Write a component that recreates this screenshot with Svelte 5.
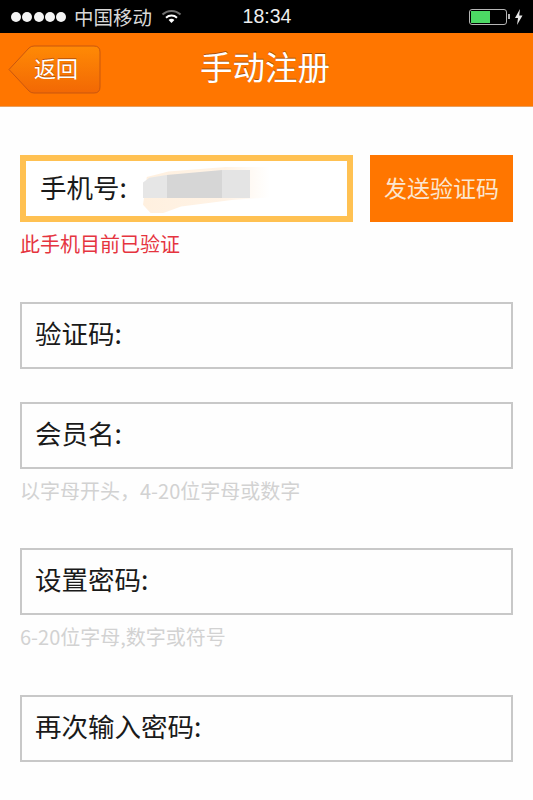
<script>
  const fields = [
    { label: '验证码:' },
    { label: '会员名:', hint: '以字母开头，4-20位字母或数字' },
    { label: '设置密码:', hint: '6-20位字母,数字或符号' },
    { label: '再次输入密码:' }
  ];
</script>

<div class="page">
  <div class="status">
    <div class="status-left">
      <span class="dots">
        {#each [1, 2, 3, 4, 5] as d (d)}<i></i>{/each}
      </span>
      <span class="carrier">中国移动</span>
      <svg class="wifi" width="21" height="15" viewBox="0 0 21 15">
        <path d="M1.5 5.5 A13 13 0 0 1 19.5 5.5" fill="none" stroke="#6f6f6f" stroke-width="2" />
        <path d="M5 8.7 A8.2 8.2 0 0 1 16 8.7" fill="none" stroke="#fff" stroke-width="2" />
        <path d="M10.5 14 L7.6 11 A4 4 0 0 1 13.4 11 Z" fill="#fff" />
      </svg>
    </div>
    <span class="time">18:34</span>
    <div class="status-right">
      <span class="battery"><span class="level"></span></span>
      <span class="nub"></span>
      <svg width="9" height="16" viewBox="0 0 9 16">
        <path d="M6 0 L1 9 H4 L3 16 L8.5 6.5 H5.2 Z" fill="#e8e8e8" />
      </svg>
    </div>
  </div>

  <header class="nav">
    <button class="back">
      <svg class="back-shape" width="93" height="49" viewBox="0 0 93 49">
        <defs>
          <linearGradient id="backfill" x1="0" y1="0" x2="0" y2="1">
            <stop offset="0" stop-color="#ff8a05" />
            <stop offset="1" stop-color="#f26804" />
          </linearGradient>
        </defs>
        <path d="M1 24.5 L21 3 Q23 1 26 1 H86 Q92 1 92 7 V42 Q92 48 86 48 H26 Q23 48 21 46 Z" fill="url(#backfill)" stroke="#c9560f" stroke-width="1" />
      </svg>
      <span>返回</span>
    </button>
    <h1>手动注册</h1>
  </header>

  <main class="form">
    <div class="phone-row">
      <div class="phone-input">
        <span>手机号:</span>
        <div class="smudge">
          <div class="smudge-glow"></div>
          <div class="smudge-grey"></div>
        </div>
      </div>
      <button class="send">发送验证码</button>
    </div>
    <p class="error">此手机目前已验证</p>

    {#each fields as f (f.label)}
      <div class="field">
        <div class="input">{f.label}</div>
        {#if f.hint}<p class="hint">{f.hint}</p>{/if}
      </div>
    {/each}
  </main>
</div>

<style>
  :global(body) {
    margin: 0;
    background: #fff;
  }

  .page {
    width: 533px;
    height: 800px;
    overflow: hidden;
    background: #fefefe;
    font-family: "Noto Sans CJK SC", "Liberation Sans", sans-serif;
  }

  .status {
    height: 33px;
    background: #000;
    color: #fff;
    display: grid;
    grid-template-columns: 1fr auto 1fr;
    align-items: center;
    padding: 0 10px 0 11px;
    box-sizing: border-box;
  }

  .status-left {
    display: flex;
    align-items: center;
  }

  .dots {
    display: flex;
    gap: 1.25px;
  }

  .dots i {
    width: 10px;
    height: 10px;
    border-radius: 50%;
    background: #f4f4f4;
  }

  .carrier {
    margin-left: 8px;
    font-size: 19.5px;
    line-height: 33px;
    color: #d8d8d8;
  }

  .wifi {
    margin-left: 9px;
  }

  .time {
    font-family: "Liberation Sans", sans-serif;
    font-size: 19.5px;
    color: #eee;
  }

  .status-right {
    display: flex;
    align-items: center;
    justify-content: flex-end;
  }

  .battery {
    width: 34px;
    height: 12px;
    border: 1px solid #b5b5b5;
    border-radius: 3px;
    padding: 1px;
    box-sizing: content-box;
  }

  .level {
    display: block;
    width: 19px;
    height: 12px;
    background: #4cd964;
  }

  .nub {
    width: 2px;
    height: 5px;
    margin: 0 4px 0 1px;
    background: #b5b5b5;
  }

  .nav {
    height: 74px;
    box-sizing: border-box;
    background: #ff7600;
    border-bottom: 1px solid #e8a060;
    display: flex;
    align-items: center;
    position: relative;
  }

  .back {
    position: relative;
    margin: -1px 0 0 8px;
    width: 93px;
    height: 49px;
    padding: 0 0 4px 26px;
    border: 0;
    background: none;
    color: #fff;
    font: inherit;
    font-size: 22px;
    text-align: left;
    text-shadow: 0 -1px 0 #b9530a;
  }

  .back span {
    position: relative;
  }

  .back-shape {
    position: absolute;
    left: 0;
    top: 0;
  }

  h1 {
    flex: 1;
    margin: 0;
    padding: 0 104px 8px 0;
    text-align: center;
    font-size: 32.5px;
    font-weight: 400;
    color: #fff;
    text-shadow: 0 -1px 0 #a6500d;
  }

  .form {
    padding: 48px 20px 0;
  }

  .phone-row {
    display: flex;
    gap: 17px;
    height: 67px;
  }

  .phone-input {
    position: relative;
    width: 333px;
    box-sizing: border-box;
    border: 6px solid #ffc152;
    background: #fff;
    padding-left: 14px;
    font-size: 26.5px;
    line-height: 52px;
    color: #1a1a1a;
  }

  .smudge {
    position: absolute;
    left: 117px;
    top: 6px;
    width: 127px;
    height: 46px;
  }

  .smudge-glow {
    position: absolute;
    inset: 0;
    background: linear-gradient(90deg, #fff0df 0, #fff3e6 65%, #fff 100%);
    clip-path: polygon(3% 22%, 20% 10%, 65% 0, 100% 0, 100% 66%, 70% 72%, 30% 86%, 16% 100%, 6% 100%, 0 82%);
  }

  .smudge-grey {
    position: absolute;
    left: 0;
    top: 3px;
    width: 107px;
    height: 28px;
    background: linear-gradient(90deg, #e6e6e6 0 24px, #d6d6d6 24px 79px, #e4e4e4 79px 107px);
    clip-path: polygon(0 100%, 0 45%, 6% 28%, 22% 18%, 74% 0, 100% 0, 100% 100%);
  }

  .send {
    width: 143px;
    border: 0;
    padding: 0 0 3px;
    background: #ff7600;
    color: #fbe6d0;
    font: inherit;
    font-size: 23px;
  }

  .error {
    margin: 8px 0 0;
    font-size: 20px;
    line-height: 28px;
    color: #e5343f;
  }

  .field {
    margin-top: 33px;
  }

  .error + .field {
    margin-top: 44px;
  }

  .input {
    height: 67px;
    box-sizing: border-box;
    border: 2px solid #c8c8c8;
    padding-left: 13px;
    font-size: 26.5px;
    line-height: 58px;
    color: #1a1a1a;
  }

  .hint {
    margin: 8px 0 43px;
    font-size: 20px;
    line-height: 28px;
    color: #d2d2d2;
  }

  .field:has(.hint) + .field:last-child {
    margin-top: 44px;
  }
</style>
